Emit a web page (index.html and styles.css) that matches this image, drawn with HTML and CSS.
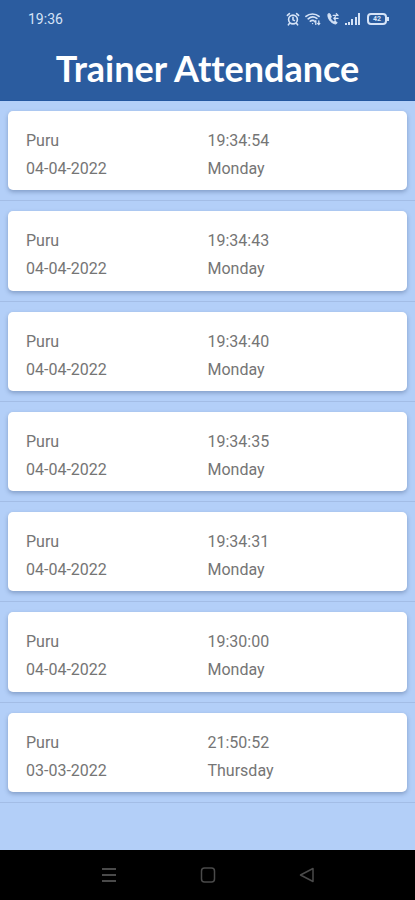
FILE: index.html
```html
<!DOCTYPE html>
<html lang="en">
<head>
    <meta charset="UTF-8">
    <meta name="viewport" content="width=device-width, initial-scale=1">
    <title>Trainer Attendance</title>
    <link rel="stylesheet" href="styles.css">
</head>
<body>
    <header class="app-header">
        <div class="status-bar">
            <span class="clock">19:36</span>
            <div class="status-icons">
                <svg width="14" height="14" viewBox="0 0 14 14" fill="none" stroke="currentColor" stroke-width="1.6" stroke-linecap="round">
                    <circle cx="7" cy="7.5" r="4.4"/>
                    <path d="M7 5.4v2.4l1.4.6M1.4 3.4l2-1.8M12.600 3.400l-2-1.800M3.400 11.600l-1 1.200M10.600 11.600l1 1.200"/>
                </svg>
                <svg width="16" height="14" viewBox="0 0 16 14" fill="none" stroke="currentColor" stroke-width="1.7" stroke-linecap="round">
                    <path d="M1 4.400C4.600 1.200 10.400 1.200 14 4.400M3.200 6.800c2.400-2 6-2.200 8.600-.4M5.400 9.200c1-.8 2.400-1 3.400-.6"/>
                    <path d="M7.500 11.600h.1M10.800 12.400V8.800M9.600 9.800l1.200-1.200M13.800 8.800v3.600M12.600 11.400l1.200 1.200 1-1.200" stroke-width="1.300"/>
                </svg>
                <svg width="14" height="14" viewBox="0 0 14 14" fill="none" stroke="currentColor" stroke-linecap="round" stroke-linejoin="round">
                    <path d="M2 2.200c-1 3.600 2.800 9 7.400 9.800.8 0 1.600-.6 1.800-1.400L8.800 9l-1.200.8C6 9 5 7.600 4.400 6l1-1L4 2z" fill="currentColor" stroke-width="1"/>
                    <path d="M7.200 3.400h4.600M10.300 1.600l1.800 1.800M12 6.400H8M9.400 4.800L7.800 6.400l1.600 1.600" stroke-width="1.300"/>
                </svg>
                <svg width="17" height="14" viewBox="0 0 17 14" fill="currentColor">
                    <rect x="0" y="11" width="2" height="2"/>
                    <rect x="3" y="10" width="2" height="3"/>
                    <rect x="6" y="7" width="2" height="6"/>
                    <rect x="10" y="5" width="2" height="8"/>
                    <rect x="13" y="1" width="2" height="12"/>
                </svg>
                <div class="battery"><span>42</span></div>
            </div>
        </div>
        <h1>Trainer Attendance</h1>
    </header>

    <main>
        <ul class="attendance-list">
            <li>
                <div class="card">
                    <span>Puru</span>
                    <span>19:34:54</span>
                    <span>04-04-2022</span>
                    <span>Monday</span>
                </div>
            </li>
            <li>
                <div class="card">
                    <span>Puru</span>
                    <span>19:34:43</span>
                    <span>04-04-2022</span>
                    <span>Monday</span>
                </div>
            </li>
            <li>
                <div class="card">
                    <span>Puru</span>
                    <span>19:34:40</span>
                    <span>04-04-2022</span>
                    <span>Monday</span>
                </div>
            </li>
            <li>
                <div class="card">
                    <span>Puru</span>
                    <span>19:34:35</span>
                    <span>04-04-2022</span>
                    <span>Monday</span>
                </div>
            </li>
            <li>
                <div class="card">
                    <span>Puru</span>
                    <span>19:34:31</span>
                    <span>04-04-2022</span>
                    <span>Monday</span>
                </div>
            </li>
            <li>
                <div class="card">
                    <span>Puru</span>
                    <span>19:30:00</span>
                    <span>04-04-2022</span>
                    <span>Monday</span>
                </div>
            </li>
            <li>
                <div class="card">
                    <span>Puru</span>
                    <span>21:50:52</span>
                    <span>03-03-2022</span>
                    <span>Thursday</span>
                </div>
            </li>
        </ul>
    </main>

    <nav class="nav-bar">
        <button type="button" aria-label="Recent apps">
            <svg width="16" height="16" viewBox="0 0 16 16" stroke="currentColor" stroke-width="2">
                <path d="M1 2h14M1 8h14M1 14h14"/>
            </svg>
        </button>
        <button type="button" aria-label="Home">
            <svg width="16" height="16" viewBox="0 0 16 16" fill="none" stroke="currentColor" stroke-width="1.5">
                <rect x="1.5" y="1" width="13" height="14" rx="3"/>
            </svg>
        </button>
        <button type="button" aria-label="Back">
            <svg width="16" height="16" viewBox="0 0 16 16" fill="none" stroke="currentColor" stroke-width="1.5" stroke-linejoin="round">
                <path d="M14 1.500v13L1.500 8z"/>
            </svg>
        </button>
    </nav>
</body>
</html>
```

FILE: styles.css
```css
* {
    box-sizing: border-box;
}

body {
    margin: 0;
    min-height: 100vh;
    display: flex;
    flex-direction: column;
    font-family: Roboto, sans-serif;
    background-color: #b3cff8;
}

.app-header {
    background-color: #2b5c9f;
    border-bottom: 1px solid #2457a0;
    color: #fff;
}

.status-bar {
    display: flex;
    justify-content: space-between;
    align-items: center;
    height: 38px;
    padding: 0 28px;
    color: #d5e3f7;
}

.clock {
    font-size: 14px;
}

.status-icons {
    display: flex;
    align-items: center;
    gap: 5px;
}

.status-icons svg {
    display: block;
}

.battery {
    position: relative;
    width: 20px;
    height: 12px;
    border: 2px solid #d5e3f7;
    border-radius: 4px;
    font-size: 7px;
    font-weight: bold;
    line-height: 8px;
    text-align: center;
}

/* battery tip */
.battery::after {
    content: "";
    position: absolute;
    top: 2px;
    right: -4px;
    width: 2px;
    height: 4px;
    background-color: #d5e3f7;
}

h1 {
    margin: 0;
    padding: 4px 0 6px;
    font-family: Lato, sans-serif;
    font-size: 36px;
    font-weight: bold;
    font-variant-ligatures: none;
    line-height: 52px;
    text-align: center;
}

main {
    flex: 1;
    display: flex;
    flex-direction: column;
    padding-bottom: 47px;
}

.attendance-list {
    flex: 1;
    display: flex;
    flex-direction: column;
    margin: 0;
    padding: 0;
    list-style: none;
}

.attendance-list li {
    flex: 1;
    display: flex;
    padding: 10px 8px;
    border-bottom: 1px solid #a3bde6;
}

.card {
    flex: 1;
    display: grid;
    grid-template-columns: 1fr 1fr;
    align-content: start;
    padding: 16px 18px 7px;
    border-radius: 5px;
    background-color: #fff;
    box-shadow: 0 2px 4px rgba(40, 65, 110, 0.35);
    color: #757575;
    font-size: 16px;
    line-height: 28px;
}

.nav-bar {
    display: flex;
    justify-content: center;
    align-items: center;
    gap: 67px;
    height: 50px;
    background-color: #000;
}

.nav-bar button {
    width: 32px;
    height: 32px;
    padding: 8px;
    border: none;
    background: none;
    color: #4a4a4a;
}

.nav-bar svg {
    display: block;
}
```
